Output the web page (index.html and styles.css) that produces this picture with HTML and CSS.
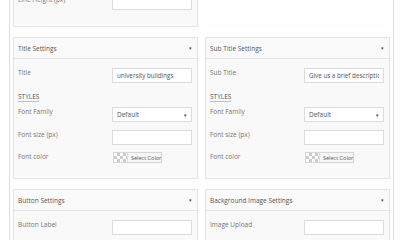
FILE: index.html
```html
<!DOCTYPE html>
<html lang="en">
<head>
  <meta charset="UTF-8" />
  <title>Slide Settings</title>
  <link rel="stylesheet" href="styles.css">
</head>
<body>
  <div class="settings-wrapper">
    <!-- LEFT COLUMN -->
    <div class="settings-column">
      <div class="panel panel-cut">
        <div class="panel-body">
          <div class="field-row">
            <label class="field-label">Line Height (px)</label>
            <input class="field-input" type="text">
          </div>
        </div>
      </div>

      <div class="panel">
        <div class="panel-header">
          <span>Title Settings</span>
          <span class="caret">&#9662;</span>
        </div>
        <div class="panel-body">
          <div class="field-row">
            <label class="field-label">Title</label>
            <input class="field-input" type="text" value="university buildings">
          </div>
          <div class="styles-heading"><span>STYLES</span></div>
          <div class="field-row">
            <label class="field-label">Font Family</label>
            <div class="field-select">Default <span class="caret">&#9662;</span></div>
          </div>
          <div class="field-row">
            <label class="field-label">Font size (px)</label>
            <input class="field-input" type="text">
          </div>
          <div class="field-row color-row">
            <label class="field-label">Font color</label>
            <div class="color-button"><span class="swatch"></span>Select Color</div>
          </div>
        </div>
      </div>

      <div class="panel">
        <div class="panel-header">
          <span>Button Settings</span>
          <span class="caret">&#9662;</span>
        </div>
        <div class="panel-body">
          <div class="field-row">
            <label class="field-label">Button Label</label>
            <input class="field-input" type="text">
          </div>
        </div>
      </div>
    </div>

    <!-- RIGHT COLUMN -->
    <div class="settings-column">
      <div class="panel panel-cut panel-empty"></div>

      <div class="panel">
        <div class="panel-header">
          <span>Sub Title Settings</span>
          <span class="caret">&#9662;</span>
        </div>
        <div class="panel-body">
          <div class="field-row">
            <label class="field-label">Sub Title</label>
            <input class="field-input" type="text" value="Give us a brief description">
          </div>
          <div class="styles-heading"><span>STYLES</span></div>
          <div class="field-row">
            <label class="field-label">Font Family</label>
            <div class="field-select">Default <span class="caret">&#9662;</span></div>
          </div>
          <div class="field-row">
            <label class="field-label">Font size (px)</label>
            <input class="field-input" type="text">
          </div>
          <div class="field-row color-row">
            <label class="field-label">Font color</label>
            <div class="color-button"><span class="swatch"></span>Select Color</div>
          </div>
        </div>
      </div>

      <div class="panel">
        <div class="panel-header">
          <span>Background Image Settings</span>
          <span class="caret">&#9662;</span>
        </div>
        <div class="panel-body">
          <div class="field-row">
            <label class="field-label">Image Upload</label>
            <input class="field-input" type="text">
          </div>
        </div>
      </div>
    </div>
  </div>
</body>
</html>
```

FILE: styles.css
```css
/* GLOBAL */
:root {
  --teal-line: #cfe8e3;
  --panel-border: #e4e4e4;
  --panel-bg: #f9f9f9;
  --label-color: #777;
  --font-family: 'Open Sans', 'Liberation Sans', sans-serif;
}

html, body {
  margin: 0;
  padding: 0;
  background: #fff;
  font-family: var(--font-family);
  font-size: 6.5px;
  color: var(--label-color);
  overflow: hidden;
}

/* OUTER WRAPPER WITH TEAL SIDE LINES */
.settings-wrapper {
  display: grid;
  grid-template-columns: 185px 185px;
  column-gap: 7px;
  width: 377px;
  margin: -14px 0 0 9px;
  padding: 0 3px 40px;
  border-left: 1px solid var(--teal-line);
  border-right: 1px solid var(--teal-line);
}

.settings-column {
  display: flex;
  flex-direction: column;
  gap: 10px;
}

/* PANELS */
.panel {
  background: var(--panel-bg);
  border: 1px solid var(--panel-border);
  box-sizing: border-box;
}
.panel-cut {
  border-top: none;
}
.panel-cut .panel-body {
  padding-bottom: 16px;
}
.panel-empty {
  height: 41px;
  background: #fff;
  border-color: #fbfbfb;
}

.panel-header {
  display: flex;
  justify-content: space-between;
  align-items: center;
  height: 20px;
  padding: 0 5px 0 4px;
  background: #fafafa;
  border-bottom: 1px solid var(--panel-border);
  color: #555;
}
.caret {
  font-size: 5px;
  color: #444;
}

.panel-body {
  display: flex;
  flex-direction: column;
  gap: 8px;
  padding: 9px 5px 15px 4px;
}

/* FIELDS */
.field-row {
  display: flex;
  justify-content: space-between;
  align-items: flex-start;
}
.field-label {
  line-height: 10px;
}
.field-input,
.field-select {
  width: 80px;
  height: 15px;
  box-sizing: border-box;
  margin: 0;
  padding: 0 4px;
  background: #fff;
  border: 1px solid #dcdcdc;
  font-family: var(--font-family);
  font-size: 6.25px;
  color: #555;
  outline: none;
}
.field-select {
  display: flex;
  justify-content: space-between;
  align-items: center;
  font-size: 6.5px;
}

.styles-heading {
  margin: 1px 0 -2px;
  line-height: 9px;
  color: #555;
}
.styles-heading span {
  border-bottom: 1px solid #a9c7dc;
}

.color-row {
  margin-top: -1px;
}
.color-button {
  display: flex;
  align-items: center;
  gap: 3px;
  width: 49px;
  height: 11px;
  box-sizing: border-box;
  margin-right: 30px;
  background: #f7f7f7;
  border: 1px solid #d6d6d6;
  font-size: 5.5px;
  white-space: nowrap;
  color: #555;
}
.swatch {
  flex: none;
  width: 13px;
  height: 9px;
  background-color: #fff;
  background-image:
    linear-gradient(45deg, #ccc 25%, transparent 25%, transparent 75%, #ccc 75%),
    linear-gradient(45deg, #ccc 25%, transparent 25%, transparent 75%, #ccc 75%);
  background-size: 6px 6px;
  background-position: 0 0, 3px 3px;
  border-right: 1px solid #ddd;
}
```
